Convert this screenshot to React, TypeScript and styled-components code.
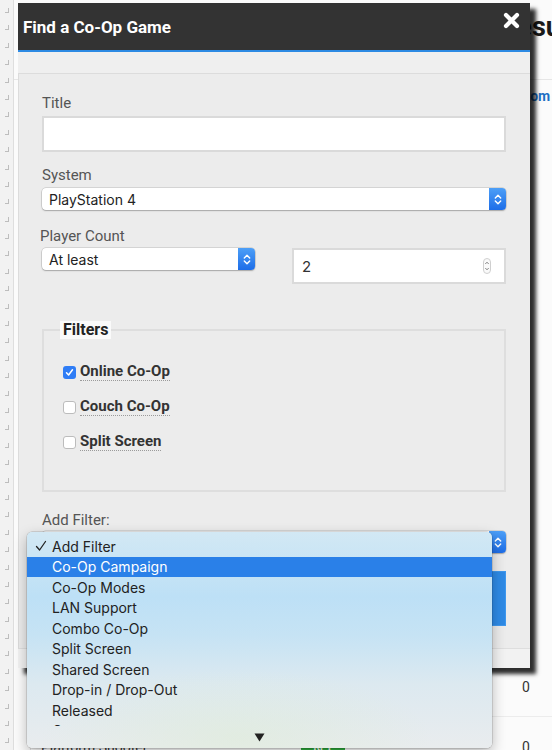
import styled, { createGlobalStyle } from "styled-components";

const GlobalStyle = createGlobalStyle`
  html, body { margin: 0; padding: 0; }
  body {
    background: #fbfbfb;
    font-family: Roboto, "Liberation Sans", sans-serif;
  }
`;

const Page = styled.div`
  position: relative;
  width: 552px;
  height: 750px;
  overflow: hidden;
  display: flex;
  background: #fbfbfb;
`;

const Gutter = styled.div`
  width: 13px;
  flex-shrink: 0;
  background: #f2f2f2;
  border-right: 1px solid #dedede;
  display: flex;
  flex-direction: column;
  align-items: center;
  gap: 12.4px;
  padding-top: 8px;
`;

const Tick = styled.span`
  width: 3px;
  height: 4px;
  flex-shrink: 0;
  border-right: 1px solid #bdbdbd;
  border-bottom: 1px solid #bdbdbd;
`;

/* page behind the dialog */
const Backdrop = styled.div`
  flex: 1;
  min-width: 0;
  display: flex;
  flex-direction: column;
`;

const TopRow = styled.div`
  height: 79px;
  flex-shrink: 0;
  border-bottom: 1px solid #e6e6e6;
  display: grid;
  grid-template-columns: 486px 1fr;
  align-items: start;
`;

const PageHeading = styled.h1`
  margin: 0;
  padding-top: 12px;
  font: 700 27px/30px Roboto, sans-serif;
  color: #1a1a1a;
  white-space: nowrap;
`;

const LinkRow = styled.div`
  flex-shrink: 0;
  display: grid;
  grid-template-columns: 484px 1fr;
  padding-top: 6px;
`;

const PageLink = styled.a`
  font: 700 14px/20px Roboto, sans-serif;
  color: #1d6fc4;
  white-space: nowrap;
`;

const Spacer = styled.div`
  flex: 1;
`;

const Table = styled.div`
  flex-shrink: 0;
  height: 93px;
  overflow: hidden;
  padding-left: 16px;
`;

const TableRow = styled.div`
  height: 59px;
  display: grid;
  grid-template-columns: 260px 44px 1fr 30px;
  align-items: center;
  border-left: 1px solid #e2e2e2;
  border-bottom: 1px solid #ececec;
  font: 14px Roboto, sans-serif;
  color: #333;
  padding-left: 10px;
`;

const Badge = styled.span`
  background: #2fae3e;
  color: #fff;
  font-size: 10px;
  font-weight: 700;
  text-align: center;
  padding: 2px 0;
`;

const Count = styled.span`
  text-align: left;
`;

/* dialog */
const Modal = styled.div`
  position: absolute;
  left: 18px;
  top: 3px;
  width: 512px;
  display: flex;
  flex-direction: column;
  background: #f2f2f2;
  box-shadow: 6px 6px 4px rgba(0, 0, 0, 0.82);
`;

const Header = styled.div`
  height: 47px;
  background: #333;
  border-bottom: 2px solid #2d8ae3;
  display: flex;
  align-items: center;
  justify-content: space-between;
  padding: 0 10px 0 5px;
`;

const HeaderTitle = styled.h2`
  margin: 0;
  font: 700 17px/20px Roboto, sans-serif;
  color: #fff;
`;

const CloseButton = styled.button`
  align-self: flex-start;
  margin-top: 9px;
  width: 17px;
  height: 17px;
  padding: 0;
  border: 0;
  background: none;
  display: flex;
`;

const Strip = styled.div`
  height: 21px;
  background: #efefef;
  border-bottom: 1px solid #dcdcdc;
`;

const Body = styled.div`
  background: #ececec;
  border-left: 1px solid #dcdcdc;
  border-bottom: 1px solid #dedede;
  padding: 20px 24px 22px 23px;
  display: flex;
  flex-direction: column;
`;

const Footer = styled.div`
  height: 19px;
  background: #f2f2f2;
`;

const Field = styled.div<{ $space?: number; $gap?: number }>`
  display: flex;
  flex-direction: column;
  gap: ${(p) => p.$gap ?? 4}px;
  margin-top: ${(p) => p.$space ?? 0}px;
`;

const Label = styled.label<{ $shift?: number }>`
  font: 15px/18px Roboto, sans-serif;
  color: #555;
  margin-left: ${(p) => p.$shift ?? 0}px;
`;

const TextInput = styled.div`
  box-sizing: border-box;
  height: 36px;
  background: #fff;
  border: 2px solid #dadada;
  display: flex;
  align-items: center;
  padding: 0 8px;
  font: 15px Inter, "Liberation Sans", sans-serif;
  color: #333;
`;

const Spinner = styled.span`
  margin-left: auto;
  margin-right: 5px;
  display: flex;
`;

const SelectBox = styled.div`
  height: 22px;
  display: flex;
  align-items: center;
  background: #fff;
  border-radius: 4px;
  box-shadow: 0 0 0 0.5px rgba(0, 0, 0, 0.2), 0 1px 1.5px rgba(0, 0, 0, 0.22);
  padding-left: 7px;
  font: 14px Inter, "Liberation Sans", sans-serif;
  color: #222;
  position: relative;
`;

const Stepper = styled.span`
  margin-left: auto;
  width: 17px;
  height: 22px;
  border-radius: 0 4px 4px 0;
  background: linear-gradient(#4d9ff7, #1d6de8);
  display: flex;
  align-items: center;
  justify-content: center;
`;

const PairRow = styled.div`
  display: grid;
  grid-template-columns: 213px 214px;
  justify-content: space-between;
  align-items: start;
`;

const FilterSet = styled.fieldset`
  margin: 37px 0 0;
  border: 2px solid #dedede;
  padding: 23px 19px 38px;
  display: flex;
  flex-direction: column;
  gap: 15px;
`;

const Legend = styled.legend`
  margin-left: -3px;
  padding: 0 3px;
  background: #fafafa;
  font: 700 16px/18px Roboto, sans-serif;
  color: #222;
`;

const CheckRow = styled.div`
  height: 20px;
  display: flex;
  align-items: center;
  gap: 4px;
`;

const Box = styled.span<{ $on?: boolean }>`
  box-sizing: border-box;
  width: 13px;
  height: 13px;
  border-radius: 3px;
  background: ${(p) => (p.$on ? "#2f7df6" : "#fff")};
  border: ${(p) => (p.$on ? "none" : "1px solid #bcbcbc")};
  display: flex;
  align-items: center;
  justify-content: center;
`;

const CheckText = styled.span`
  font: 700 15px/17px Roboto, sans-serif;
  color: #333;
  border-bottom: 1px dotted #9a9a9a;
`;

const SearchButton = styled.button`
  margin-top: 18px;
  height: 55px;
  border: 1px solid #3f98ee;
  background: #2e8ae6;
  color: #fff;
  font: 700 16px Roboto, sans-serif;
`;

/* native select popup */
const Popup = styled.div`
  position: absolute;
  left: -15px;
  top: 1px;
  width: 465px;
  height: 216px;
  border-radius: 5px;
  overflow: hidden;
  z-index: 5;
  display: flex;
  flex-direction: column;
  background:
    radial-gradient(ellipse 60% 45% at 45% 95%, rgba(222, 236, 216, 0.6), transparent 70%),
    linear-gradient(180deg, #d2e8f4 0%, #bde0f6 30%, #c6e3f4 48%, #dce9f0 70%, #e9ecee 100%);
  box-shadow: 0 0 0 0.5px rgba(0, 0, 0, 0.22), 0 5px 14px rgba(0, 0, 0, 0.28);
`;

const OptionList = styled.ul`
  list-style: none;
  margin: 0;
  padding: 4px 0 0;
  height: 194px;
  box-sizing: border-box;
  overflow: hidden;
  flex-shrink: 0;
`;

const Option = styled.li<{ $active?: boolean }>`
  position: relative;
  height: 20.5px;
  display: flex;
  align-items: center;
  padding-left: 25px;
  font: 14px Inter, "Liberation Sans", sans-serif;
  color: ${(p) => (p.$active ? "#fff" : "#222")};
  background: ${(p) => (p.$active ? "#2a80e8" : "transparent")};
`;

const Mark = styled.span`
  position: absolute;
  left: 8px;
  top: 4px;
  display: flex;
`;

const ScrollArrow = styled.div`
  flex: 1;
  display: flex;
  align-items: center;
  justify-content: center;
`;

const Chevrons = () => (
  <svg width="8" height="13" viewBox="0 0 8 13">
    <path d="M1.3 5 L4 2.2 L6.7 5 M1.3 8 L4 10.8 L6.7 8" fill="none" stroke="#fff" strokeWidth="1.4" strokeLinecap="round" strokeLinejoin="round" />
  </svg>
);

const options = [
  "Add Filter",
  "Co-Op Campaign",
  "Co-Op Modes",
  "LAN Support",
  "Combo Co-Op",
  "Split Screen",
  "Shared Screen",
  "Drop-in / Drop-Out",
  "Released",
  "Genre",
];

const filters = [
  { label: "Online Co-Op", on: true },
  { label: "Couch Co-Op", on: false },
  { label: "Split Screen", on: false },
];

export default function App() {
  return (
    <Page>
      <GlobalStyle />
      <Gutter>
        {Array.from({ length: 44 }).map((_, i) => (
          <Tick key={i} />
        ))}
      </Gutter>

      <Backdrop>
        <TopRow>
          <span />
          <PageHeading>Results</PageHeading>
        </TopRow>
        <LinkRow>
          <span />
          <PageLink>Random</PageLink>
        </LinkRow>
        <Spacer />
        <Table>
          <TableRow>
            <span>Action Adventure</span>
            <span />
            <span />
            <Count>0</Count>
          </TableRow>
          <TableRow>
            <span>Platform Shooter</span>
            <Badge>RPT</Badge>
            <span />
            <Count>0</Count>
          </TableRow>
        </Table>
      </Backdrop>

      <Modal>
        <Header>
          <HeaderTitle>Find a Co-Op Game</HeaderTitle>
          <CloseButton aria-label="Close">
            <svg width="17" height="17" viewBox="0 0 17 17">
              <path d="M3 3 L14 14 M14 3 L3 14" stroke="#fff" strokeWidth="4.2" strokeLinecap="round" />
            </svg>
          </CloseButton>
        </Header>
        <Strip />
        <Body>
          <Field>
            <Label>Title</Label>
            <TextInput />
          </Field>

          <Field $space={14}>
            <Label>System</Label>
            <SelectBox>
              PlayStation 4
              <Stepper>
                <Chevrons />
              </Stepper>
            </SelectBox>
          </Field>

          <Field $space={17} $gap={3}>
            <Label $shift={-2}>Player Count</Label>
            <PairRow>
              <SelectBox>
                At least
                <Stepper>
                  <Chevrons />
                </Stepper>
              </SelectBox>
              <TextInput>
                2
                <Spinner>
                  <svg width="8" height="16" viewBox="0 0 8 16">
                    <rect x="0.5" y="0.5" width="7" height="15" rx="3.5" fill="#fafafa" stroke="#cfcfcf" />
                    <path d="M2.3 6 L4 4.2 L5.7 6 M2.3 10 L4 11.8 L5.7 10" fill="none" stroke="#777" strokeWidth="0.9" />
                  </svg>
                </Spinner>
              </TextInput>
            </PairRow>
          </Field>

          <FilterSet>
            <Legend>Filters</Legend>
            {filters.map((f) => (
              <CheckRow key={f.label}>
                <Box $on={f.on}>
                  {f.on && (
                    <svg width="9" height="9" viewBox="0 0 9 9">
                      <path d="M1.5 4.8 L3.6 7 L7.5 1.8" fill="none" stroke="#fff" strokeWidth="1.5" strokeLinecap="round" strokeLinejoin="round" />
                    </svg>
                  )}
                </Box>
                <CheckText>{f.label}</CheckText>
              </CheckRow>
            ))}
          </FilterSet>

          <Field $space={19} $gap={2}>
            <Label>Add Filter:</Label>
            <SelectBox>
              Add Filter
              <Stepper>
                <Chevrons />
              </Stepper>
              <Popup>
                <OptionList>
                  {options.map((o, i) => (
                    <Option key={o} $active={i === 1}>
                      {i === 0 && (
                        <Mark>
                          <svg width="12" height="12" viewBox="0 0 12 12">
                            <path d="M1.5 6.5 L4.6 10 L10.5 1.5" fill="none" stroke="#222" strokeWidth="1.3" strokeLinecap="round" strokeLinejoin="round" />
                          </svg>
                        </Mark>
                      )}
                      {o}
                    </Option>
                  ))}
                </OptionList>
                <ScrollArrow>
                  <svg width="11" height="9" viewBox="0 0 11 9">
                    <path d="M0.5 0.5 H10.5 L5.5 8.5 Z" fill="#222" />
                  </svg>
                </ScrollArrow>
              </Popup>
            </SelectBox>
          </Field>

          <SearchButton>Search</SearchButton>
        </Body>
        <Footer />
      </Modal>
    </Page>
  );
}
